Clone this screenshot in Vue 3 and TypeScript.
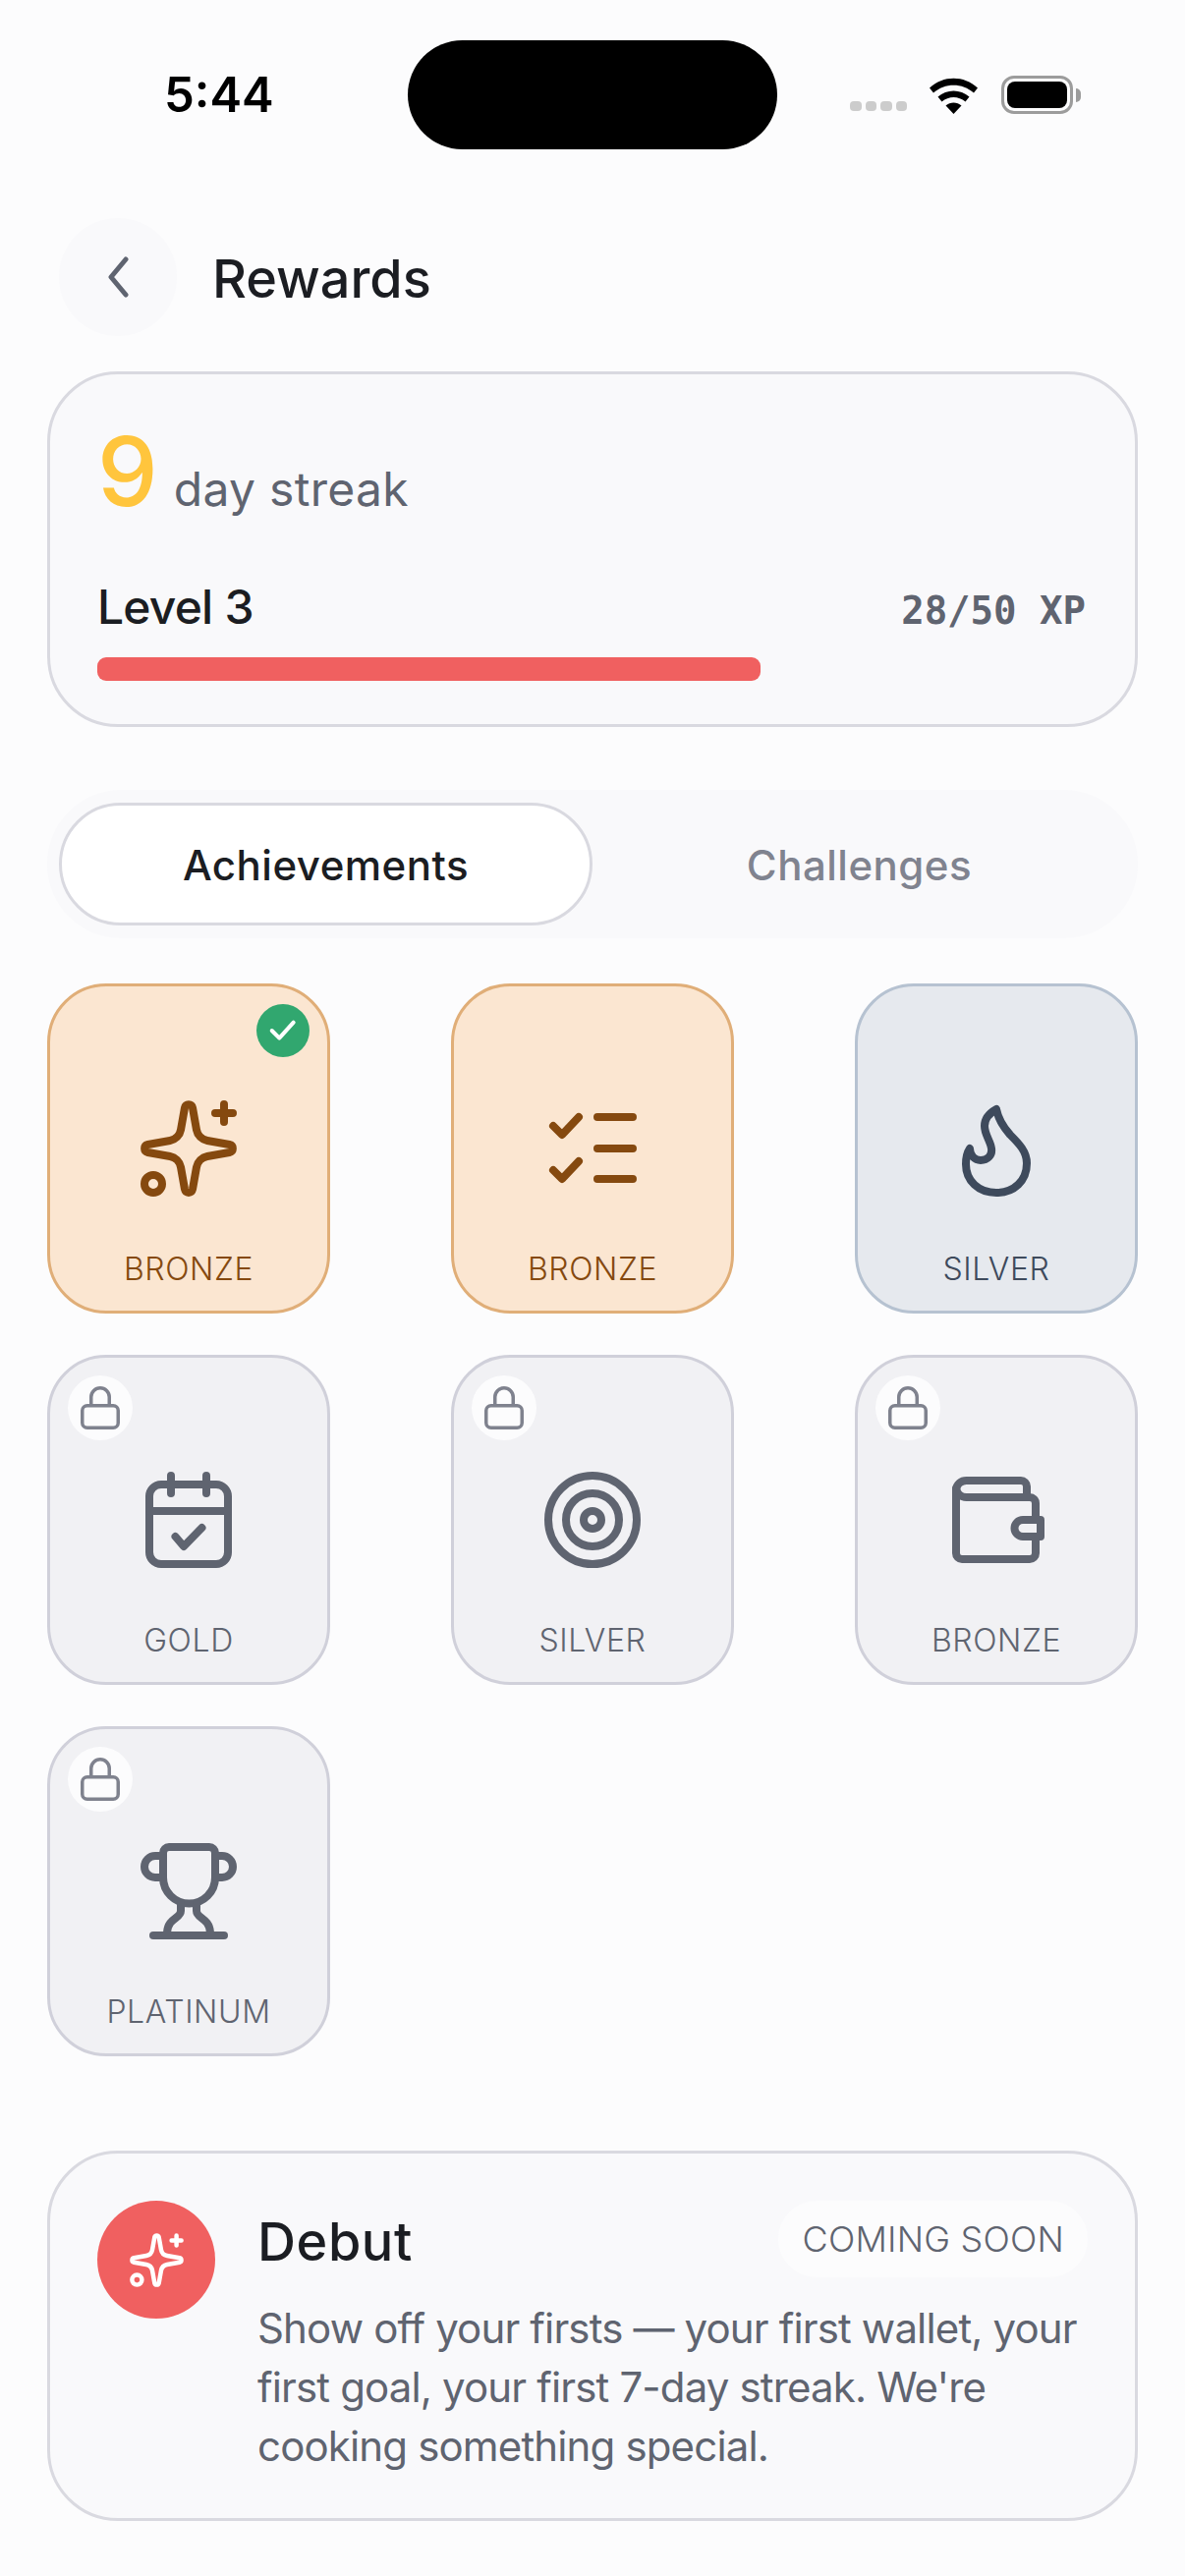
<template>
  <div class="screen">
    <!-- Status bar -->
    <div class="status-bar">
      <div class="status-left"><span class="time">5:44</span></div>
      <div class="island"></div>
      <div class="status-right">
        <div class="signal"><i v-for="n in 4" :key="n"></i></div>
        <svg class="wifi" width="51" height="38" viewBox="0 0 51 38">
          <path d="M1 11.5C15 -1.5 36 -1.5 50 11.5L46 16.5C34.5 6 16.5 6 5 16.5Z" fill="#000" />
          <path d="M9.5 20.5C18.5 12.5 32.5 12.5 41.5 20.5L37.5 25.5C30.5 19.5 20.5 19.5 13.5 25.5Z" fill="#000" />
          <path d="M17.5 29.5C22 25.5 29 25.5 33.5 29.5L25.5 38Z" fill="#000" />
        </svg>
        <div class="battery"><div class="battery-fill"></div></div>
        <div class="battery-nub"></div>
      </div>
    </div>

    <!-- Header -->
    <div class="header">
      <button class="back-btn">
        <svg width="30" height="42" viewBox="0 0 30 42" fill="none">
          <path d="M23 3L8 21L23 39" stroke="#5f6470" stroke-width="5" stroke-linecap="round" stroke-linejoin="round" />
        </svg>
      </button>
      <span class="title">Rewards</span>
    </div>

    <!-- Streak -->
    <section class="streak-card">
      <div class="streak-row">
        <span class="streak-num">9</span>
        <span class="streak-label">day streak</span>
      </div>
      <div class="level-row">
        <span class="level-name">Level 3</span>
        <span class="level-xp">28/50 XP</span>
      </div>
      <div class="progress"><div class="progress-fill" :style="{ width: progress + '%' }"></div></div>
    </section>

    <!-- Tabs -->
    <div class="tabs">
      <button
        v-for="tab in tabs"
        :key="tab"
        :class="['tab', { active: selectedTab === tab }]"
        @click="selectedTab = tab"
      >
        {{ tab }}
      </button>
    </div>

    <!-- Badges -->
    <div class="badge-grid">
      <div v-for="(badge, i) in badges" :key="i" :class="['badge', badge.tone]">
        <span v-if="badge.done" class="done-mark">
          <svg width="54" height="54" viewBox="0 0 54 54" fill="none">
            <path d="M15.7 27L23.3 34.7L37.7 18.7" stroke="#fff" stroke-width="4" stroke-linecap="round" stroke-linejoin="round" />
          </svg>
        </span>
        <span v-if="badge.tone === 'locked'" class="lock-mark">
          <svg width="66" height="66" viewBox="0 0 66 66" fill="none" stroke="#7f828e" stroke-width="3.5">
            <rect x="14.75" y="30.75" width="36.5" height="22.5" rx="5" />
            <path d="M23.75 30V22a9.25 9.25 0 0 1 18.5 0V30" />
          </svg>
        </span>
        <svg class="badge-icon" width="120" height="120" viewBox="0 0 120 120" fill="none">
          <path
            v-for="d in icons[badge.icon]"
            :key="d"
            :d="d"
            stroke="currentColor"
            stroke-width="8"
            stroke-linecap="round"
            stroke-linejoin="round"
          />
        </svg>
        <span class="badge-tier">{{ badge.tier }}</span>
      </div>
    </div>

    <!-- Debut -->
    <section class="debut-card">
      <div class="debut-icon">
        <svg width="67" height="67" viewBox="0 0 120 120" fill="none">
          <path
            v-for="d in icons.sparkle"
            :key="d"
            :d="d"
            stroke="#fff"
            stroke-width="8"
            stroke-linecap="round"
            stroke-linejoin="round"
          />
        </svg>
      </div>
      <div class="debut-body">
        <div class="debut-top">
          <span class="debut-title">Debut</span>
          <span class="debut-pill">COMING SOON</span>
        </div>
        <p class="debut-text">
          Show off your firsts — your first wallet, your first goal, your first 7-day streak. We're cooking something special.
        </p>
      </div>
    </section>
  </div>
</template>

<script setup lang="ts">
import { ref } from 'vue';

interface Badge {
  icon: string;
  tier: string;
  tone: 'bronze' | 'silver' | 'locked';
  done?: boolean;
}

const progress = 67;
const tabs = ['Achievements', 'Challenges'];
const selectedTab = ref('Achievements');

const icons: Record<string, string[]> = {
  sparkle: [
    'M56 18.5C57 14 63 14 64 18.5L68 41C69 46.5 73.5 51 79 52L101.5 56C106 57 106 63 101.5 64L79 68C73.5 69 69 73.5 68 79L64 101.5C63 106 57 106 56 101.5L52 79C51 73.5 46.5 69 41 68L18.5 64C14 63 14 57 18.5 56L41 52C46.5 51 51 46.5 52 41Z',
    'M87 24H105M96 15V33',
    'M15 96a9 9 0 1 0 18 0a9 9 0 1 0 -18 0',
  ],
  checklist: [
    'M20 37L29 46L46 28',
    'M20 82L29 91L46 73',
    'M65 28H101M65 60H101M65 91H101',
  ],
  flame: [
    'M60 20C62 30 66 37 74 46C83 55 91 63 91 75C91 93 78 105 60 105C42 105 29 93 29 76C29 68 31 63 33 60C33 67 38 72 44 72C51 72 56 67 55 60C54 52 48 46 48 37C48 30 53 24 60 20Z',
  ],
  calendar: [
    'M32 24H88a12 12 0 0 1 12 12V93a12 12 0 0 1 -12 12H32a12 12 0 0 1 -12 -12V36a12 12 0 0 1 12 -12Z',
    'M42 15V33M78 15V33M20 51H100',
    'M46.5 77L55 87L73.5 68',
  ],
  target: [
    'M15 60a45 45 0 1 0 90 0a45 45 0 1 0 -90 0',
    'M33 60a27 27 0 1 0 54 0a27 27 0 1 0 -54 0',
    'M51 60a9 9 0 1 0 18 0a9 9 0 1 0 -18 0',
  ],
  wallet: [
    'M100 60V43a6 6 0 0 0 -6 -6H29.5a10 8.5 0 0 1 0 -17H85a6 6 0 0 1 6 6V37',
    'M19 28V94a6 6 0 0 0 6 6H94a6 6 0 0 0 6 -6V77',
    'M105 60H87a8.5 8.5 0 0 0 0 17H105Z',
  ],
  trophy: [
    'M34 21a6 6 0 0 1 6 -6H81a6 6 0 0 1 6 6V46a26.5 26.5 0 0 1 -53 0Z',
    'M34 24H26a11 11 0 0 0 0 22H34',
    'M87 24H94a11 11 0 0 1 0 22H87',
    'M52 73V80C52 88 39 87 38 102',
    'M68 73V80C68 88 81 87 82 102',
    'M24 105H96',
  ],
};

const badges: Badge[] = [
  { icon: 'sparkle', tier: 'BRONZE', tone: 'bronze', done: true },
  { icon: 'checklist', tier: 'BRONZE', tone: 'bronze' },
  { icon: 'flame', tier: 'SILVER', tone: 'silver' },
  { icon: 'calendar', tier: 'GOLD', tone: 'locked' },
  { icon: 'target', tier: 'SILVER', tone: 'locked' },
  { icon: 'wallet', tier: 'BRONZE', tone: 'locked' },
  { icon: 'trophy', tier: 'PLATINUM', tone: 'locked' },
];
</script>

<style>
body {
  background: #fcfcfd;
}
</style>

<style scoped>
.screen {
  width: 1206px;
  min-height: 2622px;
  background: #fcfcfd;
  font-family: Inter, 'Noto Sans', sans-serif;
  color: #1b1d22;
  box-sizing: border-box;
  padding-top: 41px;
  overflow: hidden;
}

/* Status bar */
.status-bar {
  display: flex;
  align-items: center;
  height: 111px;
}

.status-left {
  width: 415px;
  padding-left: 167px;
  box-sizing: border-box;
}

.time {
  font-size: 49px;
  font-weight: 600;
  color: #000;
}

.island {
  width: 376px;
  height: 111px;
  border-radius: 56px;
  background: #000;
}

.status-right {
  display: flex;
  align-items: center;
  padding-left: 74px;
}

.signal {
  display: flex;
  gap: 4px;
  margin-top: 22px;
  margin-right: 22px;
}

.signal i {
  width: 11.5px;
  height: 10px;
  border-radius: 4px;
  background: #cccccc;
}

.battery {
  width: 73px;
  height: 39px;
  box-sizing: border-box;
  border: 3px solid #9c9c9c;
  border-radius: 13px;
  padding: 3px;
  margin-left: 23px;
}

.battery-fill {
  width: 100%;
  height: 100%;
  background: #000;
  border-radius: 8px;
}

.battery-nub {
  width: 5px;
  height: 14px;
  margin-left: 3px;
  background: #9c9c9c;
  border-radius: 0 5px 5px 0;
}

/* Header */
.header {
  display: flex;
  align-items: center;
  gap: 36px;
  margin: 70px 0 36px 60px;
}

.back-btn {
  display: flex;
  align-items: center;
  justify-content: center;
  width: 120px;
  height: 120px;
  padding: 0;
  border: none;
  border-radius: 50%;
  background: #f9f9fb;
}

.title {
  padding-top: 2px;
  font-size: 54px;
  font-weight: 500;
}

/* Streak card */
.streak-card {
  margin: 0 48px;
  padding: 49px 48px 42px;
  border: 3px solid #d9d9e0;
  border-radius: 72px;
  background: #f9f9fb;
  height: 362px;
  box-sizing: border-box;
}

.streak-row {
  display: flex;
  align-items: baseline;
  gap: 16px;
  height: 100px;
  line-height: 100px;
}

.streak-num {
  font-size: 98px;
  font-weight: 500;
  color: #ffc53d;
  line-height: 100px;
}

.streak-label {
  font-size: 48px;
  letter-spacing: 0.3px;
  color: #5f6470;
}

.level-row {
  display: flex;
  justify-content: space-between;
  align-items: baseline;
  margin-top: 58px;
}

.level-name {
  font-size: 48px;
  font-weight: 500;
  letter-spacing: -0.8px;
}

.level-xp {
  margin-right: 2px;
  font-family: 'DejaVu Sans Mono', monospace;
  font-size: 39px;
  font-weight: 700;
  color: #5f6470;
}

.progress {
  margin-top: 22px;
  height: 24px;
}

.progress-fill {
  height: 100%;
  border-radius: 9px;
  background: #f06060;
}

/* Tabs */
.tabs {
  display: grid;
  grid-template-columns: 1fr 1fr;
  margin: 64px 48px 0;
  padding: 13px 12px;
  height: 151px;
  box-sizing: border-box;
  border-radius: 75px;
  background: #f9f9fb;
}

.tab {
  border: 3px solid transparent;
  border-radius: 63px;
  background: transparent;
  font-family: inherit;
  font-size: 42px;
  font-weight: 500;
  letter-spacing: 0.5px;
  color: #80838f;
  padding: 1px 0 0;
}

.tab.active {
  border-color: #d9d9e0;
  background: #fff;
  color: #1b1d22;
}

/* Badges */
.badge-grid {
  display: grid;
  grid-template-columns: repeat(3, 288px);
  justify-content: space-between;
  row-gap: 42px;
  margin: 46px 48px 0;
}

.badge {
  position: relative;
  display: flex;
  flex-direction: column;
  align-items: center;
  height: 336px;
  box-sizing: border-box;
  padding-top: 105px;
  border: 3px solid #d0d0da;
  border-radius: 60px;
  background: #f1f1f4;
  color: #5f6470;
}

.badge.bronze {
  border-color: #e0ae78;
  background: #fbe6d1;
  color: #85490f;
}

.badge.silver {
  border-color: #b6c2d1;
  background: #e6e9ee;
  color: #3e4a5c;
}

.done-mark,
.lock-mark {
  position: absolute;
  top: 18px;
  display: flex;
}

.done-mark {
  right: 18px;
  border-radius: 50%;
  background: #31a76f;
}

.lock-mark {
  left: 18px;
  border-radius: 50%;
  background: #fcfcfd;
}

.badge-tier {
  margin-top: 43px;
  font-size: 32px;
  font-weight: 300;
  line-height: 40px;
  letter-spacing: 0.6px;
}

/* Debut */
.debut-card {
  display: flex;
  gap: 43px;
  align-items: flex-start;
  margin: 96px 48px 0;
  padding: 48px 48px 0;
  height: 377px;
  box-sizing: border-box;
  border: 3px solid #d9d9e0;
  border-radius: 72px;
  background: #f9f9fb;
}

.debut-icon {
  flex: 0 0 120px;
  height: 120px;
  display: flex;
  align-items: center;
  justify-content: center;
  border-radius: 50%;
  background: #f06060;
}

.debut-body {
  flex: 1;
  min-width: 0;
}

.debut-top {
  display: flex;
  justify-content: space-between;
  align-items: center;
  height: 78px;
}

.debut-title {
  padding-top: 5px;
  font-size: 54px;
  font-weight: 500;
  letter-spacing: 0.6px;
}

.debut-pill {
  height: 78px;
  line-height: 78px;
  padding: 0 24px;
  border-radius: 39px;
  background: #fcfcfd;
  font-size: 36px;
  font-weight: 300;
  letter-spacing: 0.2px;
  color: #5f6470;
}

.debut-text {
  margin: 22px 0 0;
  font-size: 42px;
  line-height: 60px;
  letter-spacing: -0.85px;
  color: #5f6470;
}
</style>
